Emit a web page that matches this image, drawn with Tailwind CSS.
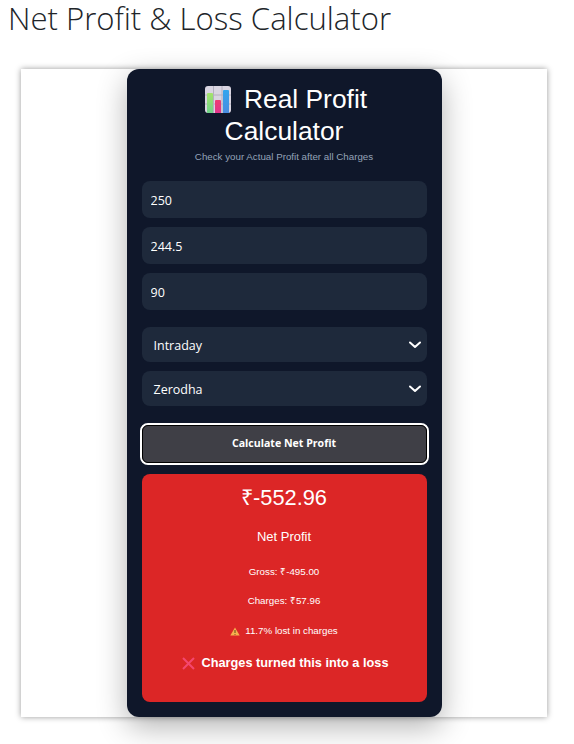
<!DOCTYPE html>
<html lang="en">
<head>
    <meta charset="UTF-8">
    <meta name="viewport" content="width=device-width, initial-scale=1.0">
    <title>Net Profit & Loss Calculator</title>
    <script src="https://cdn.jsdelivr.net/npm/@tailwindcss/browser@4"></script>
</head>
<body class="bg-white overflow-hidden h-[744px] font-['Open_Sans',sans-serif]">
    <h1 class="pl-2 h-[69px] text-[31.1px] leading-[36px] font-light text-[#212529]">Net Profit &amp; Loss Calculator</h1>
    <div class="ml-[21px] w-[526px] h-[648px] bg-white flex justify-center shadow-[0_0_6px_rgba(0,0,0,0.4)]">
        <div class="w-[315px] h-[648px] bg-[#0f172a] rounded-xl px-[15px] shadow-[0_10px_30px_rgba(0,0,0,0.3)] font-['Liberation_Sans',sans-serif]">
            <h2 class="pt-[14px] text-center text-[26.4px] leading-[32px] text-white">
                <svg class="inline-block align-[-5px] ml-[4px] mr-[13px]" width="26" height="27" viewBox="0 0 26 27">
                    <defs>
                        <linearGradient id="barGreen" x1="0" y1="0" x2="0" y2="1"><stop offset="0" stop-color="#a5e36b"/><stop offset="1" stop-color="#6fd28a"/></linearGradient>
                        <linearGradient id="barPink" x1="0" y1="0" x2="0" y2="1"><stop offset="0" stop-color="#ee3d73"/><stop offset="1" stop-color="#e0358c"/></linearGradient>
                        <linearGradient id="barBlue" x1="0" y1="0" x2="0" y2="1"><stop offset="0" stop-color="#33a6ee"/><stop offset="1" stop-color="#4a8ce0"/></linearGradient>
                    </defs>
                    <rect x="0" y="0" width="26" height="27" rx="3" fill="#d9d5e1"/>
                    <path d="M0 9h26M0 18h26M8.5 0v27M17 0v27" stroke="#b4b0bf" stroke-width="1"/>
                    <path d="M2 27V8a1 1 0 0 1 1-1h4a1 1 0 0 1 1 1v19z" fill="url(#barGreen)"/>
                    <path d="M10 27V15a1 1 0 0 1 1-1h4a1 1 0 0 1 1 1v12z" fill="url(#barPink)"/>
                    <path d="M18 27V5a1 1 0 0 1 1-1h4a1 1 0 0 1 1 1v22z" fill="url(#barBlue)"/>
                </svg>Real Profit Calculator
            </h2>
            <p class="mt-[3px] text-center text-[9.75px] leading-[14px] text-[#94a3b8]">Check your Actual Profit after all Charges</p>

            <div class="mt-[17px] flex flex-col gap-[9px] font-['Open_Sans',sans-serif]">
                <input type="text" value="250" class="h-[37px] w-full rounded-lg bg-[#1e293b] px-[9px] pt-[2px] text-[12.5px] text-white">
                <input type="text" value="244.5" class="h-[37px] w-full rounded-lg bg-[#1e293b] px-[9px] pt-[2px] text-[12.5px] text-white">
                <input type="text" value="90" class="h-[37px] w-full rounded-lg bg-[#1e293b] px-[9px] pt-[2px] text-[12.5px] text-white">
            </div>

            <div class="mt-[17px] flex flex-col gap-[9px] font-['Open_Sans',sans-serif]">
                <div class="h-[35px] rounded-lg bg-[#1e293b] pl-3 pr-[6px] flex items-center justify-between text-[12.5px] text-white">
                    <span class="pt-[3px]">Intraday</span>
                    <svg width="12" height="8" viewBox="0 0 12 8" fill="none" stroke="white" stroke-width="2" stroke-linecap="round" stroke-linejoin="round"><path d="M1 1.5l5 4.5 5-4.5"/></svg>
                </div>
                <div class="h-[35px] rounded-lg bg-[#1e293b] pl-3 pr-[6px] flex items-center justify-between text-[12.5px] text-white">
                    <span class="pt-[3px]">Zerodha</span>
                    <svg width="12" height="8" viewBox="0 0 12 8" fill="none" stroke="white" stroke-width="2" stroke-linecap="round" stroke-linejoin="round"><path d="M1 1.5l5 4.5 5-4.5"/></svg>
                </div>
            </div>

            <button class="mt-[17px] -mx-[2px] w-[289px] h-[42px] rounded-lg bg-[#3f3f46] border-2 border-white outline-1 outline-black -outline-offset-3 text-[10.6px] font-bold text-white font-['Open_Sans',sans-serif]">Calculate Net Profit</button>

            <div class="mt-[9px] h-[228px] rounded-lg bg-[#dc2626] text-white text-center flex flex-col items-center">
                <div class="mt-[11px] text-[21.8px] leading-[26px]">₹-552.96</div>
                <div class="mt-[19px] text-[13px] leading-[14px]">Net Profit</div>
                <div class="mt-[22px] text-[9.75px] leading-[12px]">Gross: ₹-495.00</div>
                <div class="mt-[17px] text-[9.75px] leading-[12px]">Charges: ₹57.96</div>
                <div class="mt-[18px] text-[9.75px] leading-[12px] flex items-center">
                    <svg class="mr-[5px]" width="10" height="9" viewBox="0 0 10 9"><path d="M5 .5L9.7 8.5H.3z" fill="#f5b04e"/><path d="M5 3v3M5 7v.8" stroke="#5a3a10" stroke-width=".9"/></svg>11.7% lost in charges
                </div>
                <div class="mt-[18px] text-[12.75px] leading-[16px] font-bold flex items-center">
                    <svg class="ml-[3px] mr-[6px]" width="13" height="13" viewBox="0 0 13 13" fill="none" stroke="#f4476f" stroke-width="2"><path d="M1 1l11 11M12 1L1 12"/></svg>Charges turned this into a loss
                </div>
            </div>
        </div>
    </div>
</body>
</html>
